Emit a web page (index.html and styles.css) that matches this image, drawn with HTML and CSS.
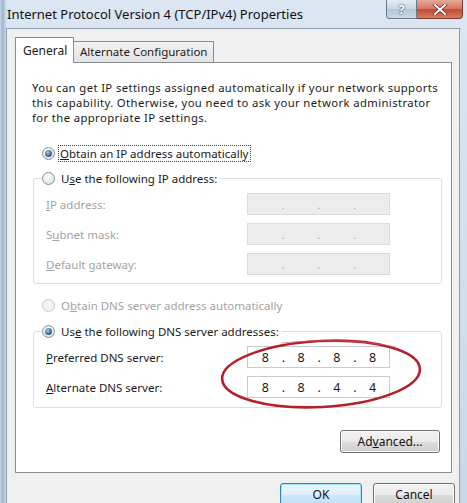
FILE: index.html
```html
<!DOCTYPE html>
<html lang="en">
<head>
    <meta charset="UTF-8">
    <meta name="viewport" content="width=device-width, initial-scale=1.0">
    <title>Internet Protocol Version 4 (TCP/IPv4) Properties</title>
    <link rel="stylesheet" href="styles.css">
</head>
<body>
    <div class="window">
        <div class="titlebar">
            <span class="title">Internet Protocol Version 4 (TCP/IPv4) Properties</span>
            <div class="caption-buttons">
                <span class="cap-btn help">?</span>
                <span class="cap-btn close">
                    <svg width="14" height="11" viewBox="0 0 14 11">
                        <path d="M2 1 L12 10 M12 1 L2 10" stroke="#6e2a1c" stroke-width="3.6" stroke-linecap="round"/>
                        <path d="M2 1 L12 10 M12 1 L2 10" stroke="#fff" stroke-width="2" stroke-linecap="round"/>
                    </svg>
                </span>
            </div>
        </div>

        <div class="client">
            <div class="tabs">
                <span class="tab active">General</span>
                <span class="tab">Alternate Configuration</span>
            </div>

            <div class="panel">
                <p class="intro">
                    You can get IP settings assigned automatically if your network supports<br>
                    this capability. Otherwise, you need to ask your network administrator<br>
                    for the appropriate IP settings.
                </p>

                <div class="radio-row">
                    <span class="radio checked"></span>
                    <span class="focus"><u>O</u>btain an IP address automatically</span>
                </div>

                <fieldset class="group">
                    <legend class="radio-row">
                        <span class="radio"></span>
                        <span>U<u>s</u>e the following IP address:</span>
                    </legend>
                    <div class="field-row disabled">
                        <span class="field-label"><u>I</u>P address:</span>
                        <span class="ip-box"><i></i><b>.</b><i></i><b>.</b><i></i><b>.</b><i></i></span>
                    </div>
                    <div class="field-row disabled">
                        <span class="field-label">S<u>u</u>bnet mask:</span>
                        <span class="ip-box"><i></i><b>.</b><i></i><b>.</b><i></i><b>.</b><i></i></span>
                    </div>
                    <div class="field-row disabled">
                        <span class="field-label"><u>D</u>efault gateway:</span>
                        <span class="ip-box"><i></i><b>.</b><i></i><b>.</b><i></i><b>.</b><i></i></span>
                    </div>
                </fieldset>

                <div class="radio-row disabled dns-auto">
                    <span class="radio"></span>
                    <span>O<u>b</u>tain DNS server address automatically</span>
                </div>

                <fieldset class="group dns-group">
                    <legend class="radio-row">
                        <span class="radio checked"></span>
                        <span>Us<u>e</u> the following DNS server addresses:</span>
                    </legend>
                    <div class="field-row">
                        <span class="field-label"><u>P</u>referred DNS server:</span>
                        <span class="ip-box"><i>8</i><b>.</b><i>8</i><b>.</b><i>8</i><b>.</b><i>8</i></span>
                    </div>
                    <div class="field-row">
                        <span class="field-label"><u>A</u>lternate DNS server:</span>
                        <span class="ip-box"><i>8</i><b>.</b><i>8</i><b>.</b><i>4</i><b>.</b><i>4</i></span>
                    </div>
                </fieldset>

                <div class="panel-actions">
                    <button class="btn">Ad<u>v</u>anced...</button>
                </div>

                <!-- hand-drawn annotation over the DNS fields -->
                <svg class="annotation" width="220" height="80" viewBox="0 0 220 80">
                    <ellipse cx="110" cy="39" rx="99" ry="33" transform="rotate(-3 110 39)"
                             fill="none" stroke="#b3202c" stroke-width="2.6"/>
                    <path d="M70 8 C 110 4, 150 5, 185 12" fill="none" stroke="#c9646b" stroke-width="1" opacity="0.6"/>
                </svg>
            </div>

            <div class="dialog-buttons">
                <button class="btn default">OK</button>
                <button class="btn">Cancel</button>
            </div>
        </div>
    </div>
</body>
</html>
```

FILE: styles.css
```css
:root {
    --frame-top: #dbe6f2;
    --frame-bottom: #c8d8e9;
    --client-bg: #f0f0f0;
    --tab-border: #898c95;
    --group-border: #d5dfe5;
    --text-color: #1a1a1a;
    --disabled-text: #a3a3a3;
}

* {
    box-sizing: border-box;
}

body {
    margin: 0;
    width: 467px;
    height: 503px;
    overflow: hidden;
    font-family: 'Segoe UI', 'Noto Sans', 'Open Sans', sans-serif;
    font-size: 11.5px;
    color: var(--text-color);
}

.window {
    height: 503px;
    display: flex;
    flex-direction: column;
    background: linear-gradient(to right, #c3d3e4 0, #9fb6cf 3px, #cfdceb 6px, transparent 7px),
                linear-gradient(to bottom, var(--frame-top), var(--frame-bottom));
}

/* title bar */
.titlebar {
    height: 29px;
    display: flex;
    justify-content: space-between;
    align-items: flex-start;
    padding-left: 7px;
}

.title {
    font-size: 13px;
    line-height: 28px;
    color: #111;
}

.caption-buttons {
    display: flex;
    margin-right: 4px;
}

.cap-btn {
    height: 19px;
    display: flex;
    align-items: center;
    justify-content: center;
    border: 1px solid #6a7a8e;
    border-top: none;
}

.help {
    width: 31px;
    border-radius: 0 0 0 4px;
    background: linear-gradient(to bottom, #e4ecf5, #c9d6e4 50%, #b3c4d7 51%, #cbd9e8);
    color: #fff;
    font-weight: bold;
    font-size: 13px;
    text-shadow: 0 0 2px #3b4c60, 0 0 1px #3b4c60;
}

.close {
    width: 46px;
    border-left: none;
    border-color: #7a3c30;
    border-radius: 0 0 4px 0;
    background: linear-gradient(to bottom, #e7a999, #d4745f 50%, #c14a33 51%, #d67c5c);
}

/* client area */
.client {
    flex: 1;
    margin: 0 7px 0 6px;
    border: 1px solid #8e9cae;
    border-bottom: none;
    background: var(--client-bg);
    padding: 0 7px 0 8px;
}

.tabs {
    display: flex;
    align-items: flex-end;
    height: 33px;
    position: relative;
    z-index: 1;
}

.tab {
    height: 21px;
    padding: 2px 0 0 6px;
    width: 140px;
    border: 1px solid var(--tab-border);
    border-bottom: none;
    border-left: none;
    background: linear-gradient(to bottom, #f3f3f3, #e3e3e3);
}

.tab.active {
    width: 59px;
    height: 26px;
    padding: 4px 0 0 7px;
    border-left: 1px solid var(--tab-border);
    background: #fff;
    margin-bottom: -1px;
    font-size: 12px;
}

.panel {
    position: relative;
    height: 411px;
    background: #fff;
    border: 1px solid var(--tab-border);
    padding: 17px 0 0 16px;
}

.intro {
    margin: 0;
    font-size: 11.3px;
    letter-spacing: 0.38px;
    line-height: 15px;
    white-space: nowrap;
}

.radio-row {
    display: flex;
    align-items: center;
    gap: 6px;
    height: 18px;
    margin: 19px 0 0 10px;
}

.radio {
    width: 13px;
    height: 13px;
    border-radius: 50%;
    border: 1px solid #8f8f8f;
    background: radial-gradient(circle at 40% 35%, #fff, #e4e4e4 70%, #d2d2d2);
    display: flex;
    align-items: center;
    justify-content: center;
    flex-shrink: 0;
}

.radio.checked::after {
    content: '';
    width: 7px;
    height: 7px;
    border-radius: 50%;
    background: radial-gradient(circle at 40% 35%, #a9c9e0, #3f6f96 55%, #1f4260);
}

.focus {
    outline: 1px dotted #444;
    outline-offset: 0;
    padding: 0 1px;
    margin-left: -2px;
}

.disabled,
.disabled .field-label {
    color: var(--disabled-text);
}

.disabled .radio {
    border-color: #c8c8c8;
    background: #f4f4f4;
}

/* group boxes */
.group {
    width: 409px;
    margin: 7px 0 0 1px;
    border: 1px solid var(--group-border);
    border-radius: 3px;
    padding: 6px 0 8px 12px;
}

.group legend.radio-row {
    margin: 0 0 0 -4px;
    padding: 0 3px 0 0;
}

.field-row {
    display: flex;
    align-items: center;
    height: 22px;
    margin-bottom: 8px;
}

.field-row:last-child {
    margin-bottom: 0;
}

.field-label {
    width: 201px;
    color: var(--text-color);
}

.ip-box {
    width: 143px;
    height: 22px;
    display: flex;
    align-items: center;
    padding-left: 1px;
    border: 1px solid #c5cbd2;
    background: #fff;
    font-size: 12.5px;
}

.ip-box i {
    font-style: normal;
    width: 33px;
    text-align: center;
}

.ip-box b {
    font-weight: normal;
    width: 3px;
    text-align: center;
}

.disabled .ip-box {
    background: #ececec;
    border-color: #dcdcdc;
    color: #a8a8a8;
    font-size: 11px;
}

.dns-auto {
    margin-top: 12px;
}

.dns-group {
    margin-top: 8px;
    padding-bottom: 9px;
}

/* buttons */
.panel-actions {
    display: flex;
    justify-content: flex-end;
    width: 408px;
    margin-top: 22px;
}

.btn {
    font-family: inherit;
    font-size: 12px;
    color: #111;
    height: 23px;
    width: 100px;
    border: 1px solid #707070;
    border-radius: 3px;
    background: linear-gradient(to bottom, #f2f2f2, #ebebeb 50%, #dddddd 51%, #cfcfcf);
    box-shadow: inset 0 0 0 1px #fcfcfc;
    padding: 0;
}

.dialog-buttons {
    display: flex;
    justify-content: flex-end;
    gap: 11px;
    margin: 10px -3px 0 0;
}

.dialog-buttons .btn {
    width: 82px;
}

.btn.default {
    border-color: #3c7fb1;
    box-shadow: inset 0 0 0 1px #9fe6fb;
    background: linear-gradient(to bottom, #eaf6fd, #e0f0fb 50%, #cfe8f8 51%, #bfe0f5);
}

.annotation {
    position: absolute;
    left: 195px;
    top: 272px;
}
```
